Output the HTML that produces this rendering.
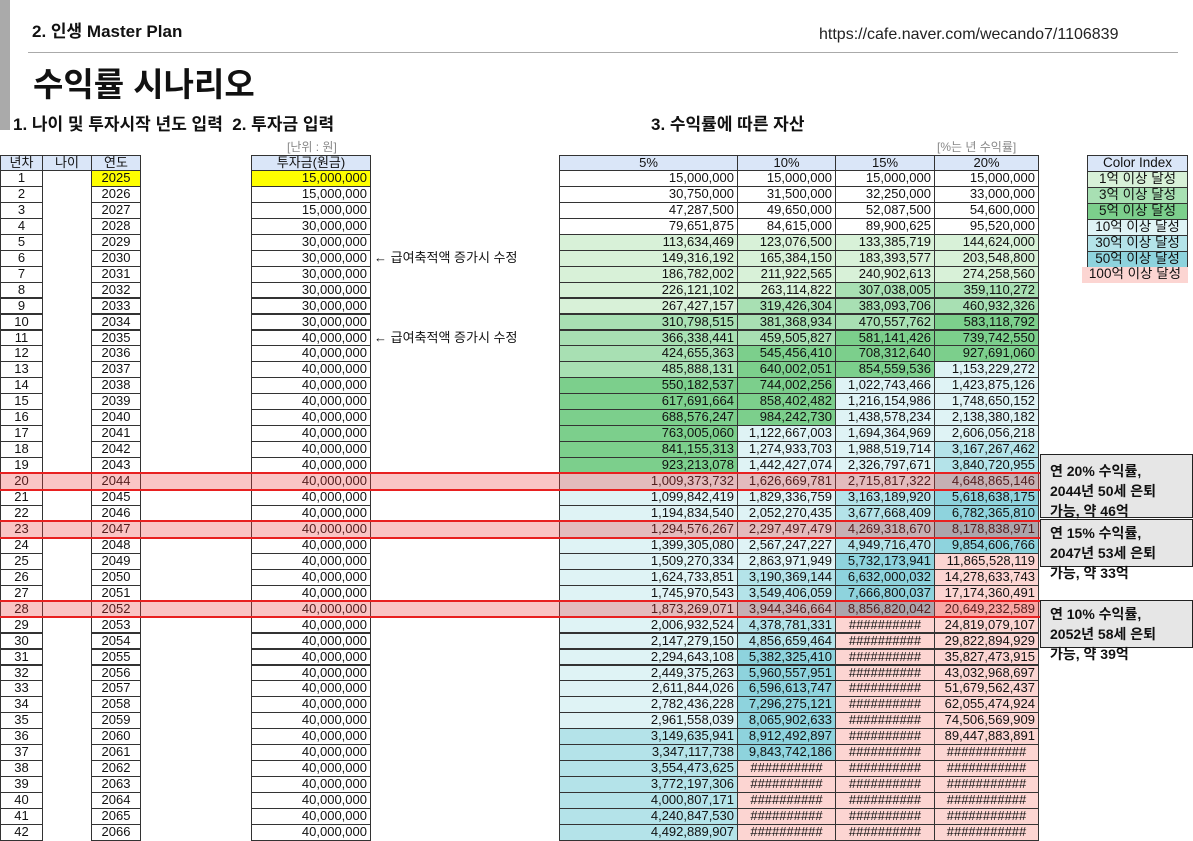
<!DOCTYPE html>
<html><head><meta charset="utf-8">
<style>
*{margin:0;padding:0;box-sizing:border-box}
body{width:1193px;height:840px;overflow:hidden;background:#fff;position:relative;font-family:"Liberation Sans","Noto Sans CJK KR",sans-serif;color:#111}
.a{position:absolute;white-space:nowrap}
.c{position:absolute;border:1px solid #333;font-size:13px;line-height:14px;padding:0 3px;white-space:nowrap;overflow:hidden;font-family:"Liberation Sans Narrow","Liberation Sans","Noto Sans CJK KR",sans-serif}
.r{text-align:right}.m{text-align:center}
.hd{background:#dae6f8}
.hl{position:absolute;left:0;width:1042px;background:rgba(240,60,60,0.3);border-top:2px solid #e82020;border-bottom:2px solid #e82020}
.box{position:absolute;left:1040px;width:153px;background:#e6e6e6;border:1.5px solid #222;font-weight:bold;font-size:14px;line-height:20px;padding:6px 0 0 9px;white-space:nowrap;overflow:visible}
</style></head><body>
<div class="a" style="left:0;top:0;width:10px;height:130px;background:#aaa"></div>
<div class="a" style="left:32px;top:17px;font-size:17px;font-weight:bold">2. 인생 Master Plan</div>
<div class="a" style="left:819px;top:26px;font-size:16px;color:#222">https://cafe.naver.com/wecando7/1106839</div>
<div class="a" style="left:28px;top:52px;width:1150px;height:1px;background:#aaa"></div>
<div class="a" style="left:33px;top:58px;font-size:33px;font-weight:bold">수익률 시나리오</div>
<div class="a" style="left:13px;top:110px;font-size:17px;font-weight:bold">1. 나이 및 투자시작 년도 입력 &nbsp;2. 투자금 입력</div>
<div class="a" style="left:651px;top:110px;font-size:17px;font-weight:bold">3. 수익률에 따른 자산</div>
<div class="a" style="left:287px;top:138px;font-size:12px;color:#888">[난위 : 원]</div>
<div class="a" style="left:937px;top:138px;font-size:12px;color:#888">[%는 년 수익률]</div>
<div id="t"></div>
<div class="box" style="top:454px;height:64px">연 20% 수익률,<br>2044년 50세 은퇴<br>가능, 약 46억</div>
<div class="box" style="top:519px;height:48px;padding-top:3px">연 15% 수익률,<br>2047년 53세 은퇴<br>가능, 약 33억</div>
<div class="box" style="top:600px;height:48px;padding-top:3px">연 10% 수익률,<br>2052년 58세 은퇴<br>가능, 약 39억</div>
<script>
var H=15.95,T0=170,out='';
function cell(x,w,y,h,txt,cls,bg,fs){out+='<div class="c '+cls+'" style="left:'+x+'px;top:'+y.toFixed(1)+'px;width:'+w+'px;height:'+(h+1).toFixed(1)+'px;'+(bg?'background:'+bg+';':'')+(fs?'font-size:'+fs+'px;':'')+'">'+txt+'</div>';}
function fmt(n){return Math.round(n).toString().replace(/\B(?=(\d{3})+(?!\d))/g,',');}
function col(v){if(v>=1e10)return'#fcd5d2';if(v>=5e9)return'#8ed3dd';if(v>=3e9)return'#b4e3e9';if(v>=1e9)return'#dff3f5';if(v>=5e8)return'#7ccf8c';if(v>=3e8)return'#a8e0b3';if(v>=1e8)return'#d8f1d8';return'#fff';}
var hy=155,hh=15;
cell(0,43,hy,hh,'년차','m hd');cell(42,50,hy,hh,'나이','m hd');cell(91,50,hy,hh,'연도','m hd');
cell(251,120,hy,hh,'투자금(원금)','m hd');
var cx=[559,737,835,934,1038],rates=[0.05,0.1,0.15,0.2],lab=['5%','10%','15%','20%'];
for(var k=0;k<4;k++)cell(cx[k],cx[k+1]-cx[k]+1,hy,hh,lab[k],'m hd');
var v=[0,0,0,0];
for(var i=1;i<=42;i++){
 var y=T0+(i-1)*H;
 var c=i<=3?15e6:(i<=10?30e6:40e6);
 cell(0,43,y,H,i,'m');
 out+='<div class="c" style="left:42px;top:'+y.toFixed(1)+'px;width:50px;height:'+(H+1).toFixed(1)+'px;border-top:none;border-bottom:none"></div>';
 cell(91,50,y,H,2024+i,'m',i==1?'#ffff00':'');
 cell(251,120,y,H,fmt(c),'r',i==1?'#ffff00':'');
 for(var k=0;k<4;k++){
  v[k]=v[k]*(1+rates[k])+c;
  var lim=k==0?1e13:(k==3?1e11:1e10);
  var s=v[k]>=lim?(k==3?'###########':'##########'):fmt(v[k]);
  cell(cx[k],cx[k+1]-cx[k]+1,y,H,s,v[k]>=lim?'m':'r',col(v[k]));
 }
}
var ci=[['Color Index','#dae6f8'],['1억 이상 달성','#d8f1d8'],['3억 이상 달성','#a8e0b3'],['5억 이상 달성','#7ccf8c'],['10억 이상 달성','#dff3f5'],['30억 이상 달성','#b4e3e9'],['50억 이상 달성','#8ed3dd']];
for(var j=0;j<ci.length;j++)cell(1087,101,hy+j*H,H,ci[j][0],'m',ci[j][1],13.5);
out+='<div class="c m" style="left:1082px;top:'+(hy+7*H).toFixed(1)+'px;width:106px;height:16px;border:none;background:#fcd5d2;font-size:13.5px">100억 이상 달성</div>';
out+='<div class="a" style="left:374px;top:'+(T0+5*H).toFixed(1)+'px;font-size:13px;line-height:16px">← 급여축적액 증가시 수정</div>';
out+='<div class="a" style="left:374px;top:'+(T0+10*H).toFixed(1)+'px;font-size:13px;line-height:16px">← 급여축적액 증가시 수정</div>';
[20,23,28].forEach(function(r){var y=T0+(r-1)*H-1;out+='<div class="hl" style="top:'+y.toFixed(1)+'px;height:'+(H+3).toFixed(1)+'px"></div>';});
document.getElementById('t').innerHTML=out;
</script>
</body></html>
